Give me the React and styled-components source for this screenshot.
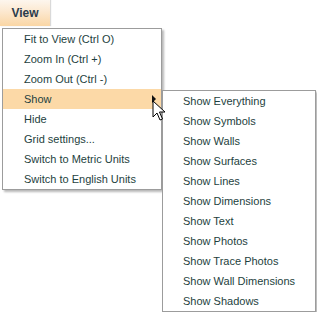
import React from "react";
import styled, { createGlobalStyle } from "styled-components";

const mainItems = [
  "Fit to View (Ctrl O)",
  "Zoom In (Ctrl +)",
  "Zoom Out (Ctrl -)",
  "Show",
  "Hide",
  "Grid settings...",
  "Switch to Metric Units",
  "Switch to English Units",
];

const showItems = [
  "Show Everything",
  "Show Symbols",
  "Show Walls",
  "Show Surfaces",
  "Show Lines",
  "Show Dimensions",
  "Show Text",
  "Show Photos",
  "Show Trace Photos",
  "Show Wall Dimensions",
  "Show Shadows",
];

const GlobalStyle = createGlobalStyle`
  html, body {
    margin: 0;
    padding: 0;
    background: #ffffff;
  }
  body {
    font-family: "Liberation Sans", Arial, sans-serif;
    font-size: 11px;
    color: #1e3f40;
  }
`;

const Page = styled.div`
  display: flex;
  flex-direction: column;
  align-items: flex-start;
  gap: 2px;
  width: 317px;
  height: 312px;
  overflow: hidden;
  background: #ffffff;
`;

const MenuTab = styled.div`
  width: 50px;
  height: 26px;
  display: flex;
  align-items: center;
  justify-content: center;
  font-size: 12px;
  font-weight: bold;
  color: #2b3b4b;
  background: linear-gradient(#fdf6ee 0%, #fce8cf 45%, #fad6a4 100%);
  box-shadow: 1px 0 1px rgba(0, 0, 0, 0.15);
  padding-bottom: 1px;
  box-sizing: border-box;
`;

const Menu = styled.ul`
  position: relative;
  list-style: none;
  margin: 0 0 0 2px;
  padding: 0;
  width: ${(p) => p.width}px;
  background: #ffffff;
  border: 1px solid #9c9c9c;
  box-shadow: 2px 2px 2px rgba(0, 0, 0, 0.28);
`;

const SubMenu = styled(Menu)`
  position: absolute;
  top: 1px;
  left: 159px;
  margin: 0;
  z-index: 2;
`;

const Item = styled.li`
  position: relative;
  display: flex;
  align-items: center;
  height: 20px;
  padding-left: ${(p) => p.indent}px;
  white-space: nowrap;
  background: ${(p) => (p.active ? "#fcd9a7" : "transparent")};
`;

const Arrow = styled.span`
  margin: 0 5px 0 auto;
  width: 0;
  height: 0;
  border-top: 4px solid transparent;
  border-bottom: 4px solid transparent;
  border-left: 4px solid #111111;
`;

const Cursor = styled.svg`
  position: absolute;
  left: 149px;
  top: 11px;
  z-index: 3;
`;

export default function App() {
  return (
    <Page>
      <GlobalStyle />
      <MenuTab>View</MenuTab>
      <Menu width={158}>
        {mainItems.map((label) => (
          <Item key={label} indent={21} active={label === "Show"}>
            {label}
            {label === "Show" && (
              <>
                <Arrow />
                <Cursor width="14" height="22" viewBox="0 0 14 22">
                  <path
                    d="M1 1 L1 17 L5 13 L8 20 L10.5 19 L7.5 12 L13 12 Z"
                    fill="#ffffff"
                    stroke="#000000"
                    strokeWidth="1"
                  />
                </Cursor>
                <SubMenu width={152}>
                  {showItems.map((s) => (
                    <Item key={s} indent={20}>
                      {s}
                    </Item>
                  ))}
                </SubMenu>
              </>
            )}
          </Item>
        ))}
      </Menu>
    </Page>
  );
}
